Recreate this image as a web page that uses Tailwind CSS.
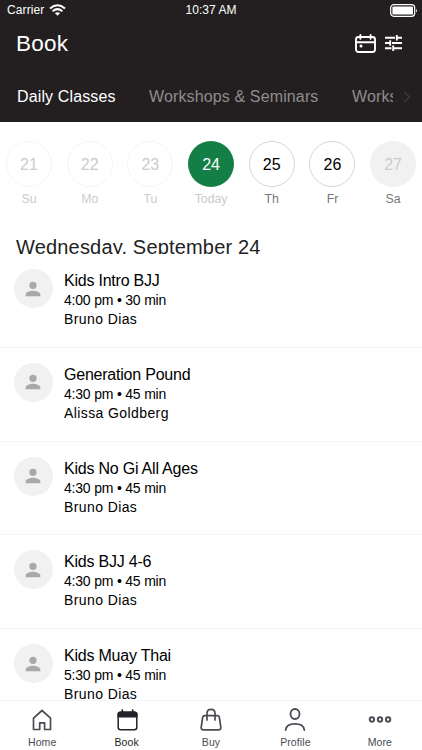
<!DOCTYPE html>
<html lang="en">
<head>
<meta charset="utf-8">
<meta name="viewport" content="width=device-width, initial-scale=1">
<title>Book</title>
<script src="https://cdn.jsdelivr.net/npm/@tailwindcss/browser@4"></script>
</head>
<body class="w-[422px] h-[750px] overflow-hidden bg-white font-['Liberation_Sans',Arial,sans-serif] text-black">
<svg class="hidden">
  <symbol id="person" viewBox="0 0 24 24"><path fill="#a9a9a9" d="M12 12a4 4 0 1 0 0-8 4 4 0 0 0 0 8zm0 2c-2.67 0-8 1.34-8 4v2h16v-2c0-2.66-5.33-4-8-4z"/></symbol>
</svg>
<div class="flex flex-col w-[422px] h-[750px] overflow-hidden">
  <header class="h-[122px] shrink-0 bg-[#231f20] text-white flex flex-col">
    <div class="h-5 grid grid-cols-3 items-center pl-[7px] pr-[4px] text-[12px] leading-5 tracking-[0.1px]">
      <div class="flex items-center gap-[5px]"><span class="text-[12px]">Carrier</span>
        <svg class="w-[17px] h-[12px]" viewBox="0 0 17 12" fill="none" stroke="white" stroke-width="2"><path d="M1 4.400Q8.500-1.900 16 4.400M3.600 7.200Q8.500 3.100 13.400 7.200"/><path d="M8.500 11.800L5.900 9.100Q8.500 7.200 11.100 9.100Z" fill="white" stroke="none"/></svg>
      </div>
      <div class="text-center whitespace-nowrap tracking-[0.050px] pr-[3px]">10:37 AM</div>
      <svg class="justify-self-end w-[28px] h-[13px]" viewBox="0 0 28 13"><rect x=".7" y=".7" width="24" height="11.600" rx="3" fill="none" stroke="white" stroke-width="1.200"/><rect x="2.400" y="2.400" width="20.600" height="8.200" rx="1.200" fill="white"/><path d="M26 4.400q1.800 2.100 0 4.200z" fill="white"/></svg>
    </div>
    <div class="h-[46px] flex items-center justify-between pl-[16px] pr-[20px]">
      <h1 class="pt-px text-[22.500px] leading-[26px] tracking-[0.200px]">Book</h1>
      <div class="flex items-center gap-[9px]">
        <svg class="w-[21px] h-[19px]" viewBox="0 0 21 19" fill="none" stroke="white" stroke-width="1.900" stroke-linecap="round"><rect x="1" y="3" width="19" height="15" rx="2.500"/><path d="M1 8.300H20M5.400 1V4.800M15.600 1V4.800"/><circle cx="6" cy="12" r="1.500" fill="white" stroke="none"/></svg>
        <svg class="w-[17px] h-[18px]" viewBox="0 0 17 18" fill="none" stroke="white" stroke-width="1.900"><path d="M0 3.700H10M12 3.700H17M11.800 1V6.400M0 9H5M7 9H17M5.200 6.300V11.700M0 14.300H6.500M8.500 14.300H17M8.200 11.600V17"/></svg>
      </div>
    </div>
    <nav class="h-[56px] pt-[5px] flex items-center pl-[17px] text-[16px] leading-5 tracking-[0.130px] whitespace-nowrap">
      <a class="w-[132px]">Daily Classes</a>
      <a class="w-[203px] text-[#8f8c8d]">Workshops &amp; Seminars</a>
      <a class="w-[41px] overflow-hidden text-[#8f8c8d]">Workshops</a>
      <svg class="ml-[10px] w-[8px] h-[12px]" viewBox="0 0 8 12" fill="none" stroke="#3c393a" stroke-width="1.500"><path d="M1 .8L6.500 6L1 11.200"/></svg>
    </nav>
  </header>

  <section class="h-[132px] shrink-0 flex flex-col overflow-hidden">
    <div class="pt-[19px] pl-[6px] flex gap-[14.700px] text-[12.300px] leading-[14px] text-center">
      <div class="w-[46px] shrink-0 text-[#cbcbcb]"><div class="size-[46px] pt-px rounded-full border border-[#f5f5f5] flex items-center justify-center text-[16px]">21</div><div class="mt-[5px]">Su</div></div>
      <div class="w-[46px] shrink-0 text-[#cbcbcb]"><div class="size-[46px] pt-px rounded-full border border-[#f5f5f5] flex items-center justify-center text-[16px]">22</div><div class="mt-[5px]">Mo</div></div>
      <div class="w-[46px] shrink-0 text-[#cbcbcb]"><div class="size-[46px] pt-px rounded-full border border-[#f5f5f5] flex items-center justify-center text-[16px]">23</div><div class="mt-[5px]">Tu</div></div>
      <div class="w-[46px] shrink-0 text-[#cbcbcb]"><div class="size-[46px] pt-px rounded-full bg-[#137f46] text-white flex items-center justify-center text-[16px]">24</div><div class="mt-[5px]">Today</div></div>
      <div class="w-[46px] shrink-0 text-[#777]"><div class="size-[46px] pt-px rounded-full border border-[#d6d6d6] text-black flex items-center justify-center text-[16px]">25</div><div class="mt-[5px]">Th</div></div>
      <div class="w-[46px] shrink-0 text-[#777]"><div class="size-[46px] pt-px rounded-full border border-[#d6d6d6] text-black flex items-center justify-center text-[16px]">26</div><div class="mt-[5px]">Fr</div></div>
      <div class="w-[46px] shrink-0 text-[#777]"><div class="size-[46px] pt-px rounded-full bg-[#f1f1f1] text-[#cbcbcb] flex items-center justify-center text-[16px]">27</div><div class="mt-[5px]">Sa</div></div>
    </div>
    <h2 class="mt-[29px] pl-[16px] text-[20px] leading-6 tracking-[0.180px] text-[#222] whitespace-nowrap">Wednesday, September 24</h2>
  </section>

  <main class="h-[446px] shrink-0 overflow-hidden text-[14px] leading-[19px]">
    <article class="h-[93.750px] border-b border-[#f5f5f5] flex pl-[14px] pt-[15px] gap-[11px]">
      <div class="size-[39px] rounded-full bg-[#f1f1f1] flex items-center justify-center"><svg class="size-[22px] mr-px"><use href="#person"/></svg></div>
      <div class="pt-[2px]"><h3 class="text-[16px] leading-5 tracking-[-0.220px]">Kids Intro BJJ</h3><p class="tracking-[-0.200px]">4:00 pm • 30 min</p><p class="tracking-[0.400px]">Bruno Dias</p></div>
    </article>
    <article class="h-[93.750px] border-b border-[#f5f5f5] flex pl-[14px] pt-[15px] gap-[11px]">
      <div class="size-[39px] rounded-full bg-[#f1f1f1] flex items-center justify-center"><svg class="size-[22px] mr-px"><use href="#person"/></svg></div>
      <div class="pt-[2px]"><h3 class="text-[16px] leading-5 tracking-[-0.220px]">Generation Pound</h3><p class="tracking-[-0.200px]">4:30 pm • 45 min</p><p class="tracking-[0.400px]">Alissa Goldberg</p></div>
    </article>
    <article class="h-[93.750px] border-b border-[#f5f5f5] flex pl-[14px] pt-[15px] gap-[11px]">
      <div class="size-[39px] rounded-full bg-[#f1f1f1] flex items-center justify-center"><svg class="size-[22px] mr-px"><use href="#person"/></svg></div>
      <div class="pt-[2px]"><h3 class="text-[16px] leading-5 tracking-[-0.220px]">Kids No Gi All Ages</h3><p class="tracking-[-0.200px]">4:30 pm • 45 min</p><p class="tracking-[0.400px]">Bruno Dias</p></div>
    </article>
    <article class="h-[93.750px] border-b border-[#f5f5f5] flex pl-[14px] pt-[15px] gap-[11px]">
      <div class="size-[39px] rounded-full bg-[#f1f1f1] flex items-center justify-center"><svg class="size-[22px] mr-px"><use href="#person"/></svg></div>
      <div class="pt-[2px]"><h3 class="text-[16px] leading-5 tracking-[-0.220px]">Kids BJJ 4-6</h3><p class="tracking-[-0.200px]">4:30 pm • 45 min</p><p class="tracking-[0.400px]">Bruno Dias</p></div>
    </article>
    <article class="h-[93.750px] flex pl-[14px] pt-[15px] gap-[11px]">
      <div class="size-[39px] rounded-full bg-[#f1f1f1] flex items-center justify-center"><svg class="size-[22px] mr-px"><use href="#person"/></svg></div>
      <div class="pt-[2px]"><h3 class="text-[16px] leading-5 tracking-[-0.220px]">Kids Muay Thai</h3><p class="tracking-[-0.200px]">5:30 pm • 45 min</p><p class="tracking-[0.400px]">Bruno Dias</p></div>
    </article>
  </main>

  <footer class="h-[50px] shrink-0 border-t border-[#f6f6f6] bg-white grid grid-cols-5 text-[10.500px] leading-3 tracking-[0.100px] text-[#4a4b52] text-center">
    <a class="flex flex-col items-center pt-[7px] gap-[4px]"><svg class="w-[24px] h-[24px]" viewBox="0 0 24 24" fill="none" stroke="#4a4b52" stroke-width="1.700" stroke-linejoin="round"><path d="M3.500 10.200L12 2.500L20.500 10.200V21.500H14.600V14.800H9.700V21.500H3.500Z"/></svg>Home</a>
    <a class="flex flex-col items-center pt-[7px] gap-[4px] text-[#231f20]"><svg class="w-[24px] h-[24px]" viewBox="0 0 24 24" fill="none" stroke="#22232a"><path d="M2.500 9.500V6.300Q2.500 3.500 5.200 3.500H19.800Q22.500 3.500 22.500 6.300V9.500Z" fill="#22232a" stroke="none"/><rect x="3.200" y="4.200" width="18.600" height="17.600" rx="2.500" stroke-width="1.500"/><path d="M7.300 2V5M17.700 2V5" stroke-width="1.700" stroke-linecap="round"/></svg>Book</a>
    <a class="flex flex-col items-center pt-[7px] gap-[4px]"><svg class="w-[24px] h-[24px]" viewBox="0 0 24 24" fill="none" stroke="#4a4b52" stroke-width="1.700" stroke-linecap="round" stroke-linejoin="round"><path d="M5.500 7.700H18.500Q20 7.700 20.300 9.200L21.800 19.200Q22 21.800 19.500 21.800H4.500Q2 21.800 2.200 19.200L3.700 9.200Q4 7.700 5.500 7.700ZM8 12V5.300Q8 1.300 12 1.300Q16 1.300 16 5.300V12"/></svg>Buy</a>
    <a class="flex flex-col items-center pt-[7px] gap-[4px]"><svg class="w-[24px] h-[24px]" viewBox="0 0 24 24" fill="none" stroke="#4a4b52" stroke-width="1.800" stroke-linecap="round"><ellipse cx="12" cy="6" rx="4.500" ry="5"/><path d="M2.700 22C3 18.200 6.200 15.800 12 15.800S21 18.200 21.300 22"/></svg>Profile</a>
    <a class="flex flex-col items-center pt-[7px] gap-[4px]"><svg class="w-[24px] h-[24px]" viewBox="0 0 24 24" fill="none" stroke="#4a4b52" stroke-width="1.900"><circle cx="3.900" cy="11.500" r="2.200"/><circle cx="12" cy="11.500" r="2.200"/><circle cx="20.100" cy="11.500" r="2.200"/></svg>More</a>
  </footer>
</div>
</body>
</html>
